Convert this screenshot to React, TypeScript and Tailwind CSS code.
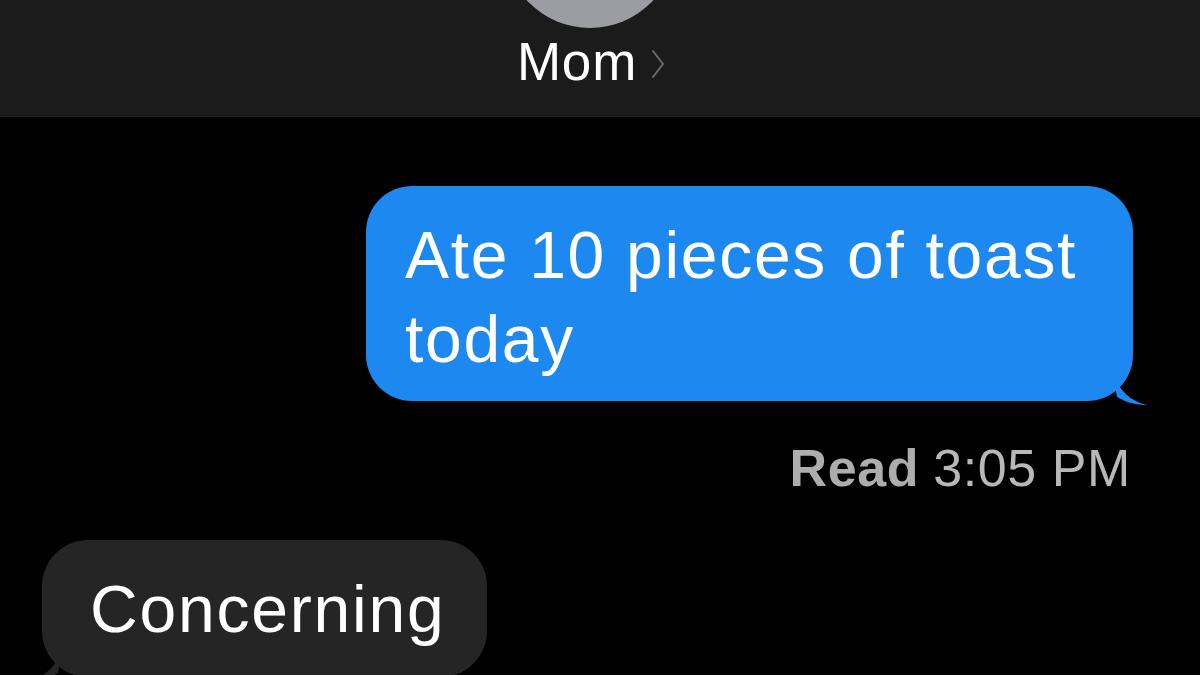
const font = { fontFamily: '"Liberation Sans", Arial, sans-serif' };

export default function App() {
  return (
    <div className="h-[675px] w-[1200px] overflow-hidden bg-black text-white" style={font}>
      <Header />
      <div className="flex flex-col">
        <div className="mr-[67px] mt-[69px] flex justify-end">
          <div className="relative w-[767px] rounded-[46px] bg-[#1e88f1] pb-[20px] pl-[39px] pr-[30px] pt-[27px]">
            <p className="text-[66px] leading-[84px] tracking-[1.7px]">
              Ate 10 pieces of toast
              <br />
              today
            </p>
            <svg className="absolute -bottom-[4px] -right-[14px] h-[30px] w-[34px]" viewBox="0 0 34 30">
              <path d="M0 0 C 6 14, 16 26, 34 30 C 24 30, 14 28, 4 22 Z" fill="#1e88f1" />
            </svg>
          </div>
        </div>

        <div className="mr-[69px] mt-[37px] flex justify-end text-[52px] leading-[60px] tracking-[0.6px] text-[#b8b8b8]">
          <span className="font-bold text-[#adadad]">Read</span>
          <span className="ml-[14px]">3:05 PM</span>
        </div>

        <div className="ml-[42px] mt-[42px] flex">
          <div className="relative rounded-[46px] bg-[#252525] pb-[30px] pl-[48px] pr-[41px] pt-[31px]">
            <p className="text-[66px] leading-[76px] tracking-[1.8px]">Concerning</p>
            <svg className="absolute -bottom-[4px] -left-[14px] h-[30px] w-[34px]" viewBox="0 0 34 30">
              <path d="M34 0 C 28 14, 18 26, 0 30 C 10 30, 20 28, 30 22 Z" fill="#252525" />
            </svg>
          </div>
        </div>
      </div>
    </div>
  );
}

function Header() {
  return (
    <div className="flex h-[117px] flex-col items-center bg-[#1b1b1b]">
      <div className="-mt-[144px] mr-[20px] h-[172px] w-[172px] shrink-0 rounded-full bg-[#9c9da2]" />
      <div className="mr-[18px] mt-[4px] flex items-center">
        <span className="text-[53px] leading-[60px] tracking-[0.8px]">Mom</span>
        <svg className="ml-[14px] mt-[4px] h-[30px] w-[14px]" viewBox="0 0 14 30" fill="none">
          <path d="M2 2 L12 15 L2 28" stroke="#6b6b6b" strokeWidth="2" strokeLinecap="round" strokeLinejoin="round" />
        </svg>
      </div>
    </div>
  );
}
